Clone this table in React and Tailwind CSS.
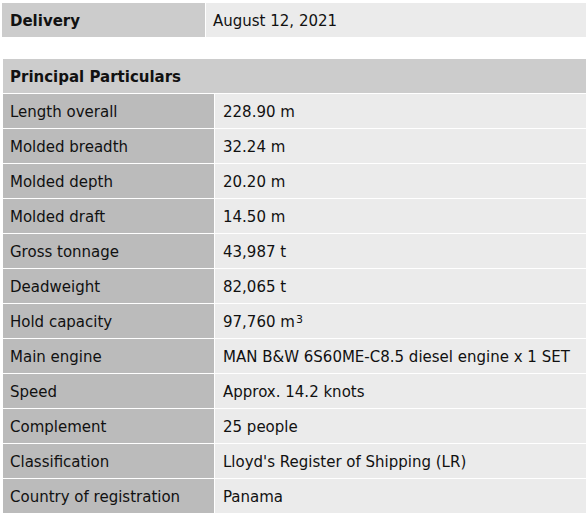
import React from 'react';

const rows = [
    ['Length overall', '228.90 m'],
    ['Molded breadth', '32.24 m'],
    ['Molded depth', '20.20 m'],
    ['Molded draft', '14.50 m'],
    ['Gross tonnage', '43,987 t'],
    ['Deadweight', '82,065 t'],
    ['Hold capacity', <>97,760 m<sup className="text-[11px] relative -top-[2px] ml-px">3</sup></>],
    ['Main engine', 'MAN B&W 6S60ME-C8.5 diesel engine x 1 SET'],
    ['Speed', 'Approx. 14.2 knots'],
    ['Complement', '25 people'],
    ['Classification', "Lloyd's Register of Shipping (LR)"],
    ['Country of registration', 'Panama'],
];

export default function App() {
    return (
        <div className="w-[586px] h-[515px] bg-white text-[15px] text-[#111] pl-[2px] pt-[3px]" style={{ fontFamily: '"DejaVu Sans", Verdana, sans-serif' }}>
            {/* Delivery */}
            <div className="flex gap-px h-[34px]">
                <div className="w-[203px] bg-[#cccccc] flex items-center pl-[8px] pt-[2px] font-bold">Delivery</div>
                <div className="flex-1 bg-[#ebebeb] flex items-center pl-[7px] pt-[2px]">August 12, 2021</div>
            </div>

            {/* Principal particulars */}
            <div className="mt-[22px] pl-px flex flex-col gap-px">
                <div className="h-[34px] bg-[#cccccc] flex items-center pl-[7px] pt-[2px] font-bold">Principal Particulars</div>
                {rows.map(([label, value], i) => (
                    <div key={i} className="flex gap-px h-[34px]">
                        <div className="w-[211px] bg-[#bbbbbb] flex items-center pl-[7px] pt-[2px]">{label}</div>
                        <div className="flex-1 bg-[#ebebeb] flex items-center pl-[8px] pt-[2px]">{value}</div>
                    </div>
                ))}
            </div>
        </div>
    );
}
